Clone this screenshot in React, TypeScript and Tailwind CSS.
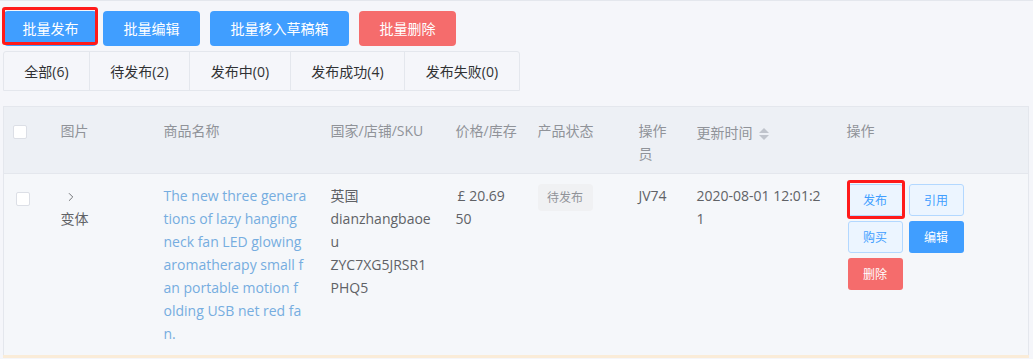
import { ChevronRight } from "lucide-react";

const font = { fontFamily: '"Open Sans", "Noto Sans CJK SC", sans-serif' };

const tabs = [
  { label: "全部(6)", w: "w-[85px]" },
  { label: "待发布(2)", w: "w-[100px]" },
  { label: "发布中(0)", w: "w-[101px]" },
  { label: "发布成功(4)", w: "w-[114px]" },
  { label: "发布失败(0)", w: "w-[115px]" },
];

// title as wrapped in the listing (break-all at column width)
const titleLines = [
  "The new three genera",
  "tions of lazy hanging",
  "neck fan LED glowing",
  "aromatherapy small f",
  "an portable motion f",
  "olding USB net red fa",
  "n.",
];

function Checkbox() {
  return <span className="inline-block w-[14px] h-[14px] rounded-[2px] border border-[#dcdfe6] bg-white" />;
}

function SortIcon() {
  return (
    <span className="inline-flex flex-col gap-[2px] ml-[6px] align-middle">
      <span className="w-0 h-0 border-x-[5px] border-x-transparent border-b-[5px] border-b-[#c0c4cc]" />
      <span className="w-0 h-0 border-x-[5px] border-x-transparent border-t-[5px] border-t-[#c0c4cc]" />
    </span>
  );
}

export default function App() {
  return (
    <div className="min-h-[359px] bg-[#f5f6fa] border-t border-[#e4e7ed] pl-[3px] text-[14px]" style={font}>
      {/* toolbar */}
      <div className="flex items-center pt-[10px] pl-[1px]">
        <div className="relative">
          <button className="h-[35px] w-[93px] rounded-[4px] bg-[#409eff] text-white">批量发布</button>
          <div className="absolute -left-[2px] -top-[4px] w-[96px] h-[38px] border-[3px] border-[#ff1a1a] rounded-[3px]" />
        </div>
        <button className="ml-[6px] h-[35px] w-[97px] rounded-[4px] bg-[#409eff] text-white">批量编辑</button>
        <button className="ml-[10px] h-[35px] w-[139px] rounded-[4px] bg-[#409eff] text-white">批量移入草稿箱</button>
        <button className="ml-[10px] h-[35px] w-[97px] rounded-[4px] bg-[#f56c6c] text-white">批量删除</button>
      </div>

      {/* tabs */}
      <div className="flex mt-[5px] h-[40px] w-fit border border-[#e4e7ed] rounded-t-[3px]">
        {tabs.map((t, i) => (
          <div
            key={t.label}
            className={`${t.w} flex items-center justify-center text-[#303133] ${i > 0 ? "border-l border-[#e4e7ed]" : ""}`}
          >
            {t.label}
          </div>
        ))}
      </div>

      {/* table */}
      <table className="mt-[15px] w-[1026px] table-fixed border-collapse border-x border-t border-[#e4e7ed] leading-[23px]">
        <colgroup>
          <col className="w-[47px]" />
          <col className="w-[103px]" />
          <col className="w-[167px]" />
          <col className="w-[125px]" />
          <col className="w-[82px]" />
          <col className="w-[101px]" />
          <col className="w-[58px]" />
          <col className="w-[150px]" />
          <col />
        </colgroup>
        <thead>
          <tr className="h-[67px] bg-[#edf0f5] text-[#909399] text-left align-top">
            <th className="font-normal pt-[15px] pl-[9px]"><Checkbox /></th>
            <th className="font-normal pt-[12px] px-[10px]">图片</th>
            <th className="font-normal pt-[12px] px-[10px]">商品名称</th>
            <th className="font-normal pt-[12px] px-[10px]">国家/店铺/SKU</th>
            <th className="font-normal pt-[12px] px-[10px]">价格/库存</th>
            <th className="font-normal pt-[12px] px-[10px]">产品状态</th>
            <th className="font-normal pt-[12px] px-[10px]">操作员</th>
            <th className="font-normal pt-[14px] px-[10px]">更新时间<SortIcon /></th>
            <th className="font-normal pt-[12px] px-[10px]">操作</th>
          </tr>
        </thead>
        <tbody>
          <tr className="bg-[#f5f7fa] text-[#606266] align-top border-t border-[#e4e7ed] border-b-[3px] border-b-[#faecd8]">
            <td className="pt-[15px] pl-[12px]"><Checkbox /></td>
            <td className="pt-[10px] pb-[10px] px-[10px]">
              <ChevronRight className="w-[14px] h-[14px] ml-[3px] mt-[6px] mb-[3px] text-[#606266]" strokeWidth={1.5} />
              <div>变体</div>
            </td>
            <td className="pt-[10px] pb-[10px] px-[10px] text-[#76ade0]">
              {titleLines.map((l) => (
                <div key={l} className="whitespace-nowrap">{l}</div>
              ))}
            </td>
            <td className="pt-[10px] px-[10px]">
              <div className="w-[102px] break-all">
                <div>英国</div>
                <div>dianzhangbaoeu</div>
                <div>ZYC7XG5JRSR1PHQ5</div>
              </div>
            </td>
            <td className="pt-[10px] px-[10px]">
              <div className="pl-[2px]">£ 20.69</div>
              <div>50</div>
            </td>
            <td className="pt-[10px] px-[10px]">
              <span className="inline-flex items-center justify-center w-[55px] h-[27px] rounded-[4px] bg-[#f0f1f3] text-[12px] text-[#909399]">待发布</span>
            </td>
            <td className="pt-[10px] px-[10px]">JV74</td>
            <td className="pt-[10px] px-[10px] break-all">2020-08-01 12:01:21</td>
            <td className="pt-[10px] pl-[11px]">
              <div className="grid grid-cols-[55px_55px] gap-x-[6px] gap-y-[5px] text-[12px]">
                <div className="relative">
                  <button className="w-[55px] h-[32px] rounded-[3px] border border-[#b3d8ff] bg-[#ecf5ff] text-[#409eff]">发布</button>
                  <div className="absolute -left-[1px] -top-[4px] w-[58px] h-[39px] border-[3px] border-[#ff1a1a] rounded-[3px]" />
                </div>
                <button className="w-[55px] h-[32px] rounded-[3px] border border-[#b3d8ff] bg-[#ecf5ff] text-[#409eff]">引用</button>
                <button className="w-[55px] h-[32px] rounded-[3px] border border-[#b3d8ff] bg-[#ecf5ff] text-[#409eff]">购买</button>
                <button className="w-[55px] h-[32px] rounded-[3px] bg-[#409eff] text-white">编辑</button>
                <button className="w-[55px] h-[32px] rounded-[3px] bg-[#f56c6c] text-white">删除</button>
              </div>
            </td>
          </tr>
        </tbody>
      </table>
    </div>
  );
}
